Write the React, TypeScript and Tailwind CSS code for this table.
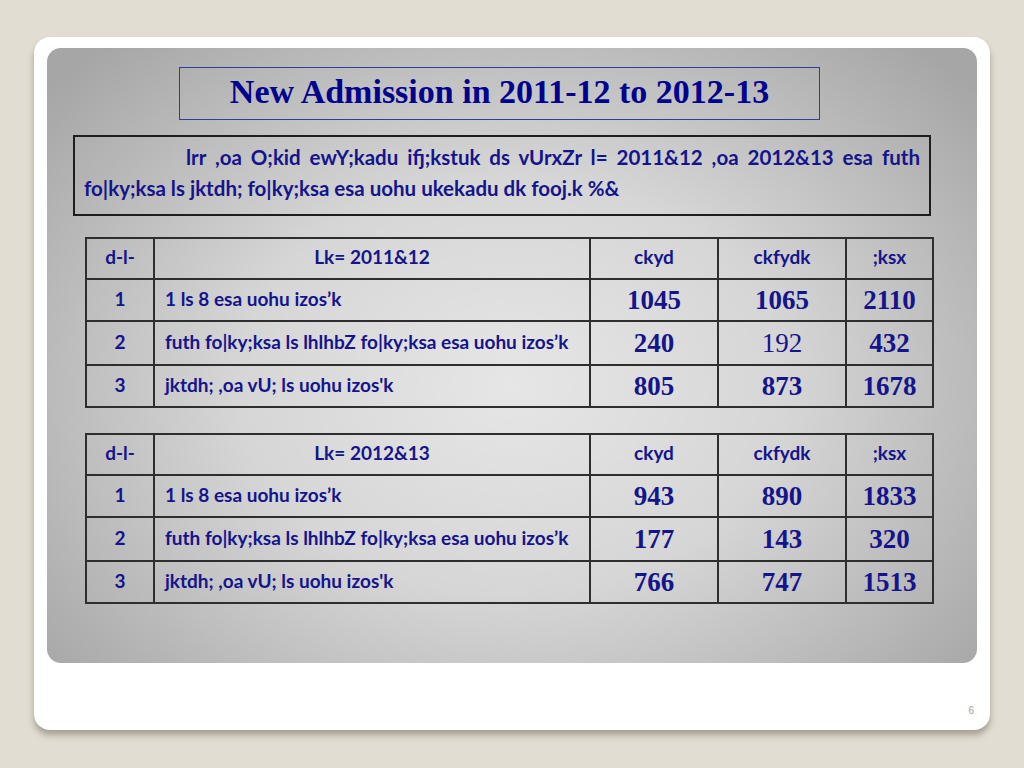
import React from "react";

interface IRow {
  sn: string;
  label: string;
  boys: string;
  girls: string;
  total: string;
  thinGirls?: boolean;
}

interface ITable {
  session: string;
  rows: IRow[];
}

const tables: ITable[] = [
  {
    session: "Lk= 2011&12",
    rows: [
      { sn: "1", label: "1 ls 8 esa uohu izos’k", boys: "1045", girls: "1065", total: "2110" },
      { sn: "2", label: "futh fo|ky;ksa ls lhlhbZ fo|ky;ksa esa uohu izos’k", boys: "240", girls: "192", total: "432", thinGirls: true },
      { sn: "3", label: "jktdh; ,oa vU; ls uohu izos'k", boys: "805", girls: "873", total: "1678" }
    ]
  },
  {
    session: "Lk= 2012&13",
    rows: [
      { sn: "1", label: "1 ls 8 esa uohu izos’k", boys: "943", girls: "890", total: "1833" },
      { sn: "2", label: "futh fo|ky;ksa ls lhlhbZ fo|ky;ksa esa uohu izos’k", boys: "177", girls: "143", total: "320" },
      { sn: "3", label: "jktdh; ,oa vU; ls uohu izos'k", boys: "766", girls: "747", total: "1513" }
    ]
  }
];

const cell = "border-2 border-[#2e2e2e]";
const sans = "font-['Lato','Open_Sans',sans-serif] font-bold text-[19px] leading-tight";
const num = "font-['Liberation_Serif',serif] text-[27px] leading-none";

const AdmissionTable: React.FC<ITable> = ({ session, rows }) => {
  return (
    <table className="w-[847px] border-collapse table-fixed text-[#14148c]">
      <colgroup>
        <col className="w-[68px]" />
        <col className="w-[436px]" />
        <col className="w-[128px]" />
        <col className="w-[128px]" />
        <col className="w-[87px]" />
      </colgroup>
      <thead>
        <tr className="h-[41px]">
          <th className={`${cell} ${sans} pb-[3px]`}>d-l-</th>
          <th className={`${cell} ${sans} pb-[3px]`}>{session}</th>
          <th className={`${cell} ${sans} pb-[3px]`}>ckyd</th>
          <th className={`${cell} ${sans} pb-[3px]`}>ckfydk</th>
          <th className={`${cell} ${sans} pb-[3px]`}>;ksx</th>
        </tr>
      </thead>
      <tbody>
        {rows.map((r, i) => (
          <tr key={r.sn} className={i === 1 ? "h-[44px]" : "h-[42px]"}>
            <td className={`${cell} ${sans} text-center pb-[3px]`}>{r.sn}</td>
            <td className={`${cell} ${sans} pl-[10px] pb-[3px] whitespace-nowrap`}>{r.label}</td>
            <td className={`${cell} ${num} font-bold text-center`}>{r.boys}</td>
            <td className={`${cell} ${num} ${r.thinGirls ? "font-normal" : "font-bold"} text-center`}>
              {r.girls}
            </td>
            <td className={`${cell} ${num} font-bold text-center`}>{r.total}</td>
          </tr>
        ))}
      </tbody>
    </table>
  );
};

export default function App() {
  return (
    <div className="w-[1024px] h-[768px] bg-[#e2ddd2] pl-[34px] pt-[37px] overflow-hidden">
      <div className="w-[956px] h-[693px] bg-white rounded-[16px] shadow-[0_5px_6px_rgba(90,85,70,0.45)] pl-[13px] pt-[11px] flex flex-col">
        <div className="w-[930px] h-[615px] rounded-[14px] bg-[radial-gradient(ellipse_65%_75%_at_50%_55%,#e6e6e6_0%,#d6d6d6_45%,#a6a6a6_100%)] flex flex-col">
          <div className="ml-[132px] mt-[19px] w-[641px] h-[53px] border border-[#2c3f9a] flex items-center justify-center">
            <h1 className="font-['Liberation_Serif',serif] font-bold text-[34px] text-[#00008f] leading-none pb-[4px]">
              New Admission in 2011-12 to 2012-13
            </h1>
          </div>
          <div className="ml-[26px] mt-[15px] w-[858px] h-[81px] border-2 border-[#1e1e1e] px-[9px] pt-[5px]">
            <p className="font-['Lato','Open_Sans',sans-serif] font-bold text-[20.5px] leading-[31px] text-[#14148c] text-justify indent-[102px]">
              lrr ,oa O;kid ewY;kadu ifj;kstuk ds vUrxZr l= 2011&12 ,oa 2012&13 esa futh fo|ky;ksa ls jktdh; fo|ky;ksa esa uohu ukekadu dk fooj.k %&
            </p>
          </div>
          <div className="ml-[38px] mt-[21px]">
            <AdmissionTable {...tables[0]} />
          </div>
          <div className="ml-[38px] mt-[25px]">
            <AdmissionTable {...tables[1]} />
          </div>
        </div>
        <div className="w-[930px] flex justify-end pr-[3px] pt-[40px]">
          <span className="font-['Liberation_Sans',sans-serif] text-[10px] text-[#a0a0a0]">6</span>
        </div>
      </div>
    </div>
  );
}
